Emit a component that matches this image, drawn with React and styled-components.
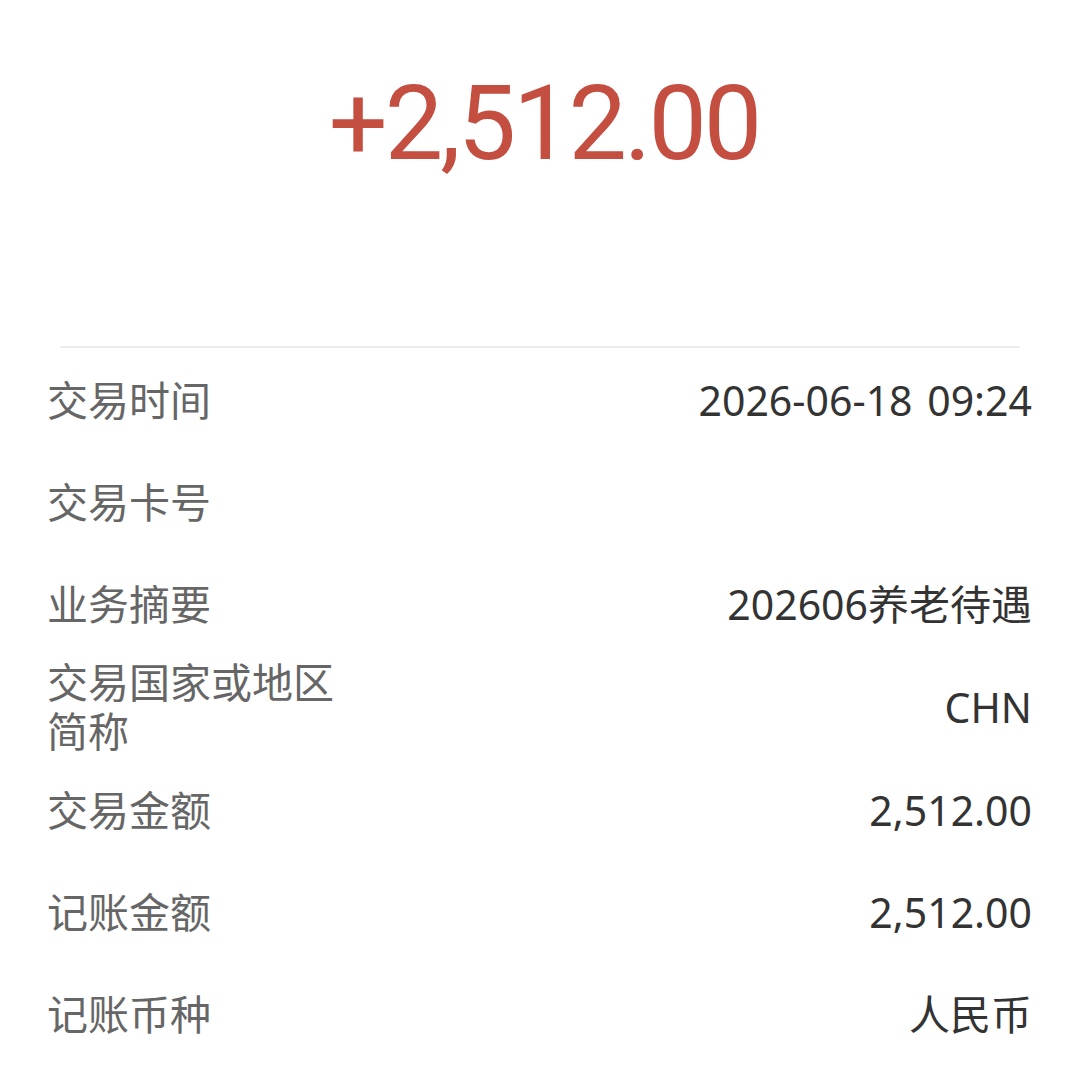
import React from 'react';
import styled, { createGlobalStyle } from 'styled-components';

const GlobalStyle = createGlobalStyle`
  html, body {
    margin: 0;
    padding: 0;
    background: #fff;
  }
  body {
    font-family: "Noto Sans", "Noto Sans CJK SC", sans-serif;
  }
`;

const Page = styled.div`
  width: 1080px;
  min-height: 1077px;
  background: #fff;
`;

const Hero = styled.div`
  height: 346px;
  display: flex;
  justify-content: center;
  padding: 62px 0 0 8px;
  box-sizing: border-box;
`;

const Amount = styled.div`
  font-family: Roboto, sans-serif;
  font-size: 104px;
  line-height: 124px;
  color: #c44e40;
  letter-spacing: -3px;
`;

const Divider = styled.div`
  height: 2px;
  margin: 0 60px;
  background: #ececec;
`;

const List = styled.div`
  padding: 1px 48px 0 47px;
`;

const Row = styled.div`
  display: flex;
  justify-content: space-between;
  align-items: center;
  min-height: 96px;
  padding: 3px 0;
  font-size: 41px;
  line-height: 49px;
`;

const Label = styled.div`
  color: #666;
  width: ${p => (p.$wrap ? '300px' : 'auto')};
`;

const Value = styled.div`
  color: #333;
  text-align: right;
  word-spacing: 4px;
`;

const rows = [
  { label: '交易时间', value: '2026-06-18 09:24' },
  { label: '交易卡号', value: '' },
  { label: '业务摘要', value: '202606养老待遇' },
  { label: '交易国家或地区简称', value: 'CHN', wrap: true },
  { label: '交易金额', value: '2,512.00' },
  { label: '记账金额', value: '2,512.00' },
  { label: '记账币种', value: '人民币' },
];

export default function App() {
  return (
    <Page>
      <GlobalStyle />
      <Hero>
        <Amount>+2,512.00</Amount>
      </Hero>
      <Divider />
      <List>
        {rows.map(r => (
          <Row key={r.label}>
            <Label $wrap={r.wrap}>{r.label}</Label>
            <Value>{r.value}</Value>
          </Row>
        ))}
      </List>
    </Page>
  );
}
